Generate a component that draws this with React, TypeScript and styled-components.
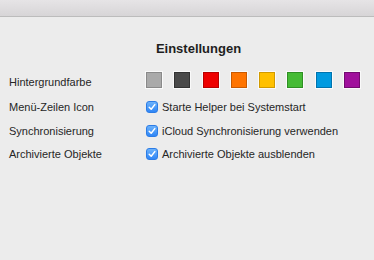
import React from "react";
import styled, { createGlobalStyle } from "styled-components";

const GlobalStyle = createGlobalStyle`
  html, body {
    margin: 0;
    padding: 0;
    background: #ececec;
  }
  body {
    font-family: "Liberation Sans", Arial, sans-serif;
    -webkit-font-smoothing: antialiased;
  }
`;

const Window = styled.div`
  width: 374px;
  height: 260px;
  background: #ececec;
  display: flex;
  flex-direction: column;
  overflow: hidden;
`;

const TitleBar = styled.div`
  height: 16px;
  background: linear-gradient(#e6e4e6, #d7d5d7);
  border-bottom: 1px solid #bcbcbc;
`;

const Heading = styled.h1`
  margin: 24px 0 0;
  padding-left: 23px;
  text-align: center;
  font-size: 13px;
  font-weight: 700;
  color: #1e1e1e;
  line-height: 16px;
`;

const Form = styled.div`
  display: grid;
  grid-template-columns: 137px 1fr;
  grid-template-rows: 26px 24px 24px 22px;
  margin: 12px 0 0 9px;
  align-items: center;
`;

const Label = styled.div`
  font-size: 11px;
  color: #262626;
  line-height: 14px;
`;

const Swatches = styled.div`
  display: flex;
  gap: 12.3px;
  margin-bottom: 4px;
`;

const Swatch = styled.div<{ $fill: string; $edge: string }>`
  width: 14px;
  height: 14px;
  background: ${(p) => p.$fill};
  border: 1px solid ${(p) => p.$edge};
  box-shadow: 0 0 0 1px #fafafa;
`;

const Check = styled.label`
  display: flex;
  align-items: center;
  gap: 4px;
  font-size: 11px;
  color: #262626;
  line-height: 14px;
`;

const Box = styled.span`
  width: 12px;
  height: 12px;
  border-radius: 3px;
  background: linear-gradient(#6cb2fb, #2f86f6);
  border: 1px solid #2c7ce6;
  box-sizing: border-box;
  display: flex;
  align-items: center;
  justify-content: center;
`;

const colors: [string, string][] = [
  ["#aaaaaa", "#8a8a8a"],
  ["#4a4a4a", "#333333"],
  ["#ee0000", "#b80000"],
  ["#ff7400", "#c95a00"],
  ["#ffc000", "#d19a00"],
  ["#45bb35", "#2f8f24"],
  ["#009ae0", "#0073ad"],
  ["#a0109c", "#730b70"],
];

function Checkbox({ children }: { children: React.ReactNode }) {
  return (
    <Check>
      <Box>
        <svg width="8" height="8" viewBox="0 0 8 8">
          <path d="M1.2 4.2 L3.2 6.2 L6.8 1.6" fill="none" stroke="#fff" strokeWidth="1.5" strokeLinecap="round" strokeLinejoin="round" />
        </svg>
      </Box>
      {children}
    </Check>
  );
}

export default function App() {
  return (
    <Window>
      <GlobalStyle />
      <TitleBar />
      <Heading>Einstellungen</Heading>
      <Form>
        <Label>Hintergrundfarbe</Label>
        <Swatches>
          {colors.map(([fill, edge]) => (
            <Swatch key={fill} $fill={fill} $edge={edge} />
          ))}
        </Swatches>
        <Label>Menü-Zeilen Icon</Label>
        <Checkbox>Starte Helper bei Systemstart</Checkbox>
        <Label>Synchronisierung</Label>
        <Checkbox>iCloud Synchronisierung verwenden</Checkbox>
        <Label>Archivierte Objekte</Label>
        <Checkbox>Archivierte Objekte ausblenden</Checkbox>
      </Form>
    </Window>
  );
}
